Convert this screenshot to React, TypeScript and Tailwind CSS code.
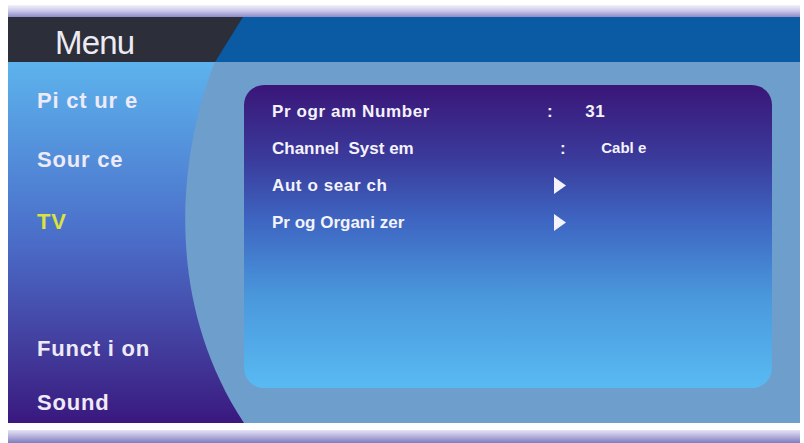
import React from "react";

const Tri = () => (
  <svg width="14" height="17" viewBox="0 0 14 17" className="block">
    <polygon points="1,0 13,8.5 1,17" fill="#f4f2fb" />
  </svg>
);

export default function App() {
  const font = { fontFamily: '"Liberation Sans", Arial, sans-serif' };
  return (
    <div className="w-[804px] h-[443px] bg-white overflow-hidden flex flex-col" style={font}>
      <div className="h-[5px] shrink-0" />
      <div className="h-[12px] shrink-0 ml-[8px] mr-[4px] bg-gradient-to-b from-[#f3f2fb] via-[#c9c6e8] to-[#8d89c8]" />
      {/* header */}
      <div className="h-[45px] shrink-0 ml-[8px] mr-[4px] bg-[#0a5aa4] flex">
        <div className="w-[236px] h-full bg-[#2c2e3a] [clip-path:polygon(0_0,235px_0,207px_100%,0_100%)] flex items-center">
          <span className="ml-[47px] text-[33px] leading-none text-[#ecebf2] tracking-[-0.8px] mt-[6px]">Menu</span>
        </div>
      </div>
      {/* body */}
      <div className="h-[361px] shrink-0 ml-[8px] mr-[4px] bg-[#6d9ecc] flex">
        <div className="w-[236px] h-full shrink-0 bg-gradient-to-b from-[#5db3ed] via-[#4a6cc8] to-[#39177f] [clip-path:path('M0,0_H207_C175,80_150,230_236,361_H0_Z')] flex flex-col text-[22px] font-bold tracking-[0.8px] text-[#eeeaf8] pl-[29px]">
          <div className="mt-[27px] h-[24px] leading-[24px] whitespace-pre">Pi ct ur e</div>
          <div className="mt-[35px] h-[24px] leading-[24px] whitespace-pre">Sour ce</div>
          <div className="mt-[38px] h-[24px] leading-[24px] text-[#d9e23e]">TV</div>
          <div className="mt-[103px] h-[24px] leading-[24px] whitespace-pre">Funct i on</div>
          <div className="mt-[30px] h-[24px] leading-[24px]">Sound</div>
        </div>
        <div className="mt-[23px] w-[528px] h-[303px] rounded-[20px] bg-[linear-gradient(to_bottom,#3a1678_0%,#3a3c9c_25%,#3e66c2_45%,#4a98dc_70%,#59baf2_100%)] pt-[8px] pl-[28px] text-[#f4f2fb] text-[17px] font-bold tracking-[0.6px]">
          <div className="h-[37px] flex items-center">
            <span className="w-[275px] whitespace-pre">Pr ogr am Number</span>
            <span>:</span>
            <span className="ml-[32px]">31</span>
          </div>
          <div className="h-[37px] flex items-center">
            <span className="w-[288px] whitespace-pre tracking-[0px]">Channel  Syst em</span>
            <span>:</span>
            <span className="ml-[35px] text-[15px] whitespace-pre tracking-[0px]">Cabl e</span>
          </div>
          <div className="h-[37px] flex items-center">
            <span className="w-[281px] whitespace-pre">Aut o sear ch</span>
            <Tri />
          </div>
          <div className="h-[37px] flex items-center">
            <span className="w-[281px] whitespace-pre tracking-[0px]">Pr og Organi zer</span>
            <Tri />
          </div>
        </div>
      </div>
      <div className="h-[7px] shrink-0" />
      <div className="h-[13px] shrink-0 ml-[8px] mr-[4px] bg-gradient-to-b from-[#e6e4f6] via-[#b4b1dc] to-[#7f7cbe]" />
    </div>
  );
}
